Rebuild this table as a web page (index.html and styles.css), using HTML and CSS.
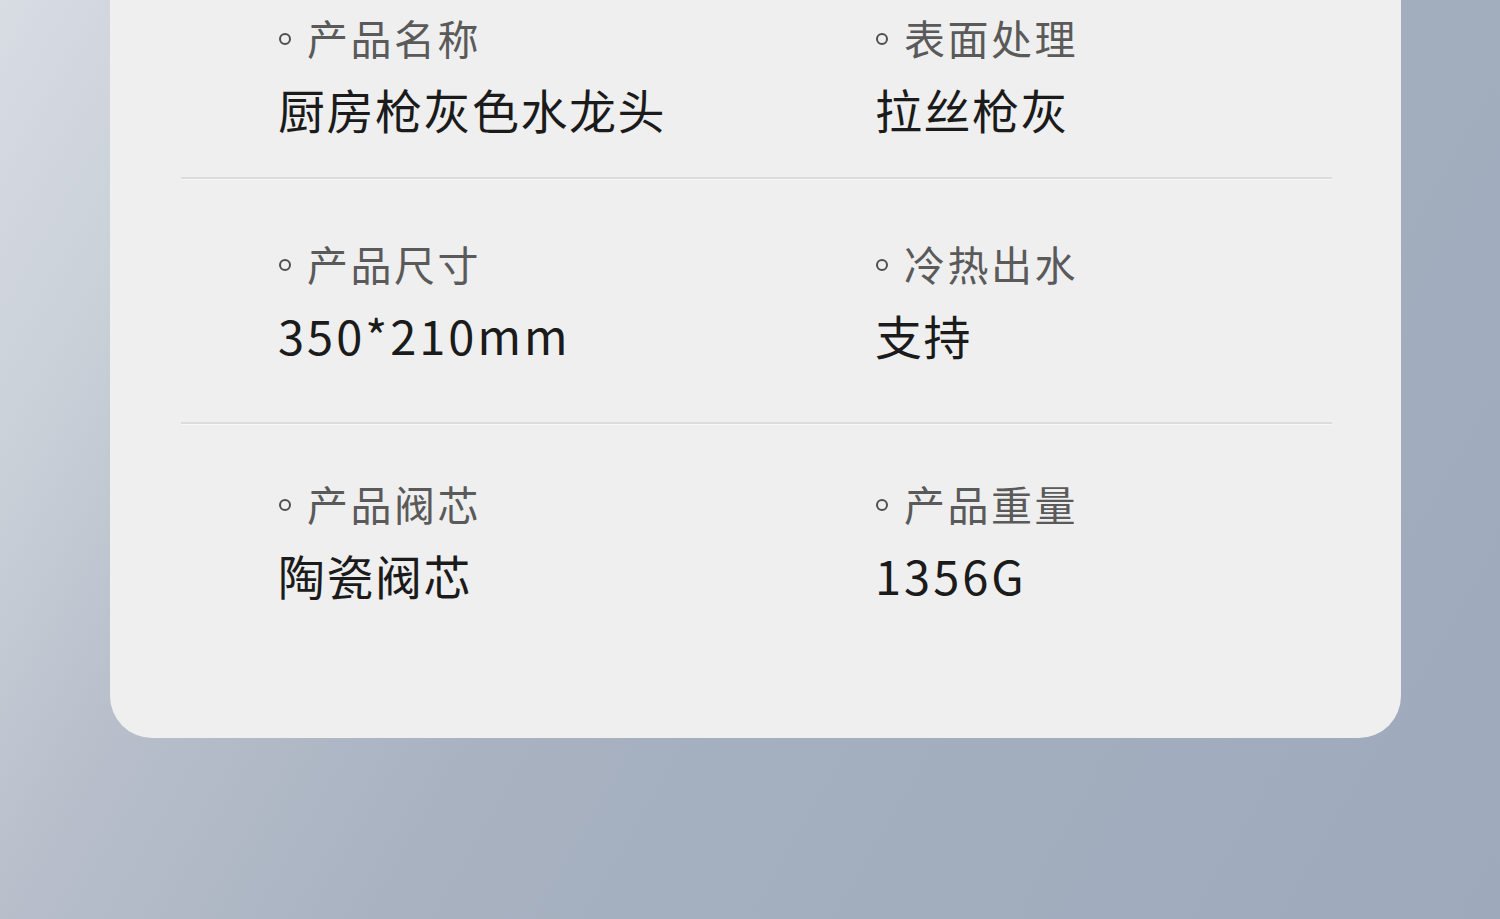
FILE: index.html
```html
<!DOCTYPE html>
<html lang="zh-CN">
<head>
    <meta charset="UTF-8">
    <title>产品参数</title>
    <link rel="stylesheet" href="styles.css">
</head>
<body>
    <div class="page">
        <div class="card">
            <div class="spec-row first">
                <div class="spec">
                    <div class="label"><span class="dot"></span>产品名称</div>
                    <div class="value">厨房枪灰色水龙头</div>
                </div>
                <div class="spec">
                    <div class="label"><span class="dot"></span>表面处理</div>
                    <div class="value">拉丝枪灰</div>
                </div>
            </div>
            <div class="spec-row">
                <div class="spec">
                    <div class="label"><span class="dot"></span>产品尺寸</div>
                    <div class="value num">350*210mm</div>
                </div>
                <div class="spec">
                    <div class="label"><span class="dot"></span>冷热出水</div>
                    <div class="value">支持</div>
                </div>
            </div>
            <div class="spec-row last">
                <div class="spec">
                    <div class="label"><span class="dot"></span>产品阀芯</div>
                    <div class="value">陶瓷阀芯</div>
                </div>
                <div class="spec">
                    <div class="label"><span class="dot"></span>产品重量</div>
                    <div class="value num">1356G</div>
                </div>
            </div>
        </div>
    </div>
</body>
</html>
```

FILE: styles.css
```css
*{
    margin: 0;
    padding: 0;
    box-sizing: border-box;
}
html, body{
    width: 1500px;
    height: 919px;
    overflow: hidden;
}
body{
    font-family: "Noto Sans CJK SC", "Noto Sans", sans-serif;
    background: linear-gradient(120deg, #d8dce3 0%, #cbd1d9 13%, #b8bfcb 26%, #a8b2c1 45%, #a3aebe 65%, #9eaabc 100%);
}
.page{
    padding: 0 99px 0 110px;
}
.card{
    width: 1291px;
    height: 738px;
    background-color: #efefef;
    border-radius: 0 0 42px 42px;
    padding: 0 69px 0 71px;
}
.spec-row{
    display: grid;
    grid-template-columns: 597px 597px;
    padding: 59px 0 57px 97px;
    border-top: 2px solid #dcdcdc;
    box-shadow: inset 0 1px 0 #f8f8f8;
}
.spec-row.first{
    border-top: none;
    box-shadow: none;
    padding-top: 12px;
    padding-bottom: 38px;
}
.spec-row.last{
    padding-top: 54px;
}
.label{
    display: flex;
    align-items: center;
    height: 50px;
    font-size: 41px;
    color: #5a5a5a;
    letter-spacing: 2.5px;
}
.dot{
    width: 12px;
    height: 12px;
    border: 2px solid #4f4f4f;
    border-radius: 50%;
    margin: 4px 16px 0 1px;
}
.value{
    height: 60px;
    line-height: 60px;
    margin-top: 17px;
    font-size: 47px;
    color: #1b1b1b;
    letter-spacing: 1.5px;
}
.value.num{
    letter-spacing: 3px;
}
```
